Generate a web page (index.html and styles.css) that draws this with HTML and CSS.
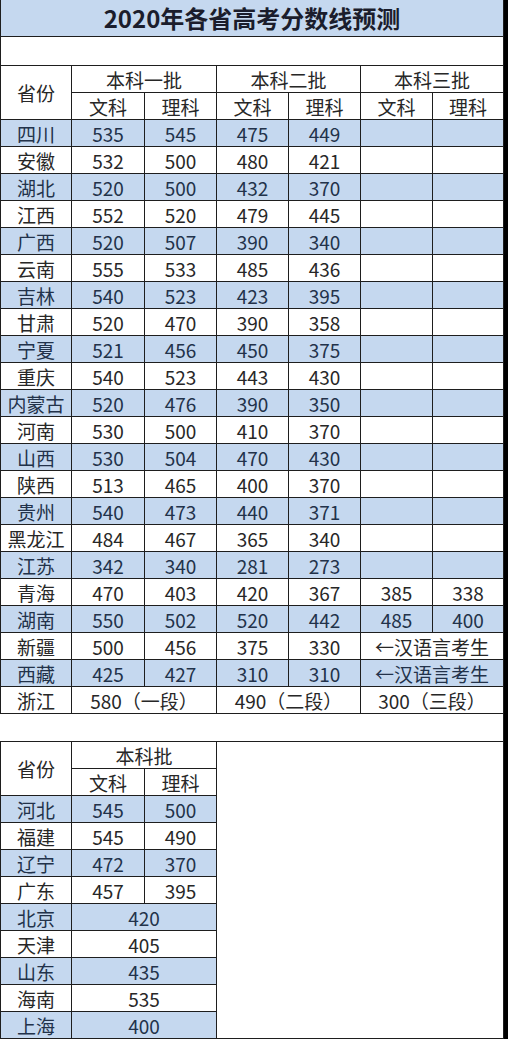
FILE: index.html
```html
<!DOCTYPE html>
<html lang="zh-CN">
<head>
<meta charset="utf-8">
<title>2020年各省高考分数线预测</title>
<link rel="stylesheet" href="styles.css">
</head>
<body>
<div class="sheet">
  <div class="grid main">
    <div class="c title">2020年各省高考分数线预测</div>
    <div class="c blank"></div>
    <div class="c rs2">省份</div>
    <div class="c cs2">本科一批</div>
    <div class="c cs2">本科二批</div>
    <div class="c cs2">本科三批</div>
    <div class="c">文科</div><div class="c">理科</div>
    <div class="c">文科</div><div class="c">理科</div>
    <div class="c">文科</div><div class="c">理科</div>

    <div class="row b"><span>四川</span><span>535</span><span>545</span><span>475</span><span>449</span><span></span><span></span></div>
    <div class="row"><span>安徽</span><span>532</span><span>500</span><span>480</span><span>421</span><span></span><span></span></div>
    <div class="row b"><span>湖北</span><span>520</span><span>500</span><span>432</span><span>370</span><span></span><span></span></div>
    <div class="row"><span>江西</span><span>552</span><span>520</span><span>479</span><span>445</span><span></span><span></span></div>
    <div class="row b"><span>广西</span><span>520</span><span>507</span><span>390</span><span>340</span><span></span><span></span></div>
    <div class="row"><span>云南</span><span>555</span><span>533</span><span>485</span><span>436</span><span></span><span></span></div>
    <div class="row b"><span>吉林</span><span>540</span><span>523</span><span>423</span><span>395</span><span></span><span></span></div>
    <div class="row"><span>甘肃</span><span>520</span><span>470</span><span>390</span><span>358</span><span></span><span></span></div>
    <div class="row b"><span>宁夏</span><span>521</span><span>456</span><span>450</span><span>375</span><span></span><span></span></div>
    <div class="row"><span>重庆</span><span>540</span><span>523</span><span>443</span><span>430</span><span></span><span></span></div>
    <div class="row b"><span>内蒙古</span><span>520</span><span>476</span><span>390</span><span>350</span><span></span><span></span></div>
    <div class="row"><span>河南</span><span>530</span><span>500</span><span>410</span><span>370</span><span></span><span></span></div>
    <div class="row b"><span>山西</span><span>530</span><span>504</span><span>470</span><span>430</span><span></span><span></span></div>
    <div class="row"><span>陕西</span><span>513</span><span>465</span><span>400</span><span>370</span><span></span><span></span></div>
    <div class="row b"><span>贵州</span><span>540</span><span>473</span><span>440</span><span>371</span><span></span><span></span></div>
    <div class="row"><span>黑龙江</span><span>484</span><span>467</span><span>365</span><span>340</span><span></span><span></span></div>
    <div class="row b"><span>江苏</span><span>342</span><span>340</span><span>281</span><span>273</span><span></span><span></span></div>
    <div class="row"><span>青海</span><span>470</span><span>403</span><span>420</span><span>367</span><span>385</span><span>338</span></div>
    <div class="row b"><span>湖南</span><span>550</span><span>502</span><span>520</span><span>442</span><span>485</span><span>400</span></div>
    <div class="row"><span>新疆</span><span>500</span><span>456</span><span>375</span><span>330</span><span class="cs2">←汉语言考生</span></div>
    <div class="row b"><span>西藏</span><span>425</span><span>427</span><span>310</span><span>310</span><span class="cs2">←汉语言考生</span></div>
    <div class="row"><span>浙江</span><span class="cs2">580（一段）</span><span class="cs2">490（二段）</span><span class="cs2">300（三段）</span></div>
  </div>

  <div class="gap"></div>

  <div class="lower">
    <div class="grid sub">
      <div class="c rs2">省份</div>
      <div class="c cs2">本科批</div>
      <div class="c">文科</div><div class="c">理科</div>
      <div class="row b"><span>河北</span><span>545</span><span>500</span></div>
      <div class="row"><span>福建</span><span>545</span><span>490</span></div>
      <div class="row b"><span>辽宁</span><span>472</span><span>370</span></div>
      <div class="row"><span>广东</span><span>457</span><span>395</span></div>
      <div class="row b"><span>北京</span><span class="cs2">420</span></div>
      <div class="row"><span>天津</span><span class="cs2">405</span></div>
      <div class="row b"><span>山东</span><span class="cs2">435</span></div>
      <div class="row"><span>海南</span><span class="cs2">535</span></div>
      <div class="row b"><span>上海</span><span class="cs2">400</span></div>
    </div>
    <div class="filler"></div>
  </div>
</div>
</body>
</html>
```

FILE: styles.css
```css
html, body {
  margin: 0;
  padding: 0;
}
body {
  background: #000;
  font-family: "Noto Sans CJK SC", "Noto Sans", sans-serif;
  color: #272727;
}
.sheet {
  width: 504px;
  background: #fff;
}
.grid {
  display: grid;
  box-sizing: border-box;
  border-left: 1px solid #1e1e1e;
  grid-auto-rows: 27px;
}
.main {
  width: 504px;
  grid-template-columns: 71px 73px 72px 72px 72px 72px 71px;
  grid-template-rows: 37px 29px;
}
.row {
  display: contents;
}
.c, .row > span {
  display: flex;
  align-items: center;
  justify-content: center;
  box-sizing: border-box;
  border-right: 1px solid #1e1e1e;
  border-bottom: 1px solid #1e1e1e;
  font-size: 19px;
  line-height: 1;
  white-space: nowrap;
  overflow: hidden;
}
.row.b > span {
  background: #c5d8ef;
  color: #22324a;
}
.title {
  grid-column: 1 / -1;
  background: #c5d8ef;
  font-size: 24px;
  font-weight: 700;
  color: #1b1d2c;
}
.blank {
  grid-column: 1 / -1;
}
.cs2 {
  grid-column: span 2;
}
.rs2 {
  grid-row: span 2;
}
.gap {
  height: 28px;
  box-sizing: border-box;
  border-right: 1px solid #1e1e1e;
  border-bottom: 1px solid #1e1e1e;
}
.lower {
  display: flex;
}
.sub {
  width: 217px;
  grid-template-columns: 71px 73px 72px;
}
.filler {
  flex: 1;
  box-sizing: border-box;
  border-right: 1px solid #1e1e1e;
  border-bottom: 1px solid #1e1e1e;
}
```
